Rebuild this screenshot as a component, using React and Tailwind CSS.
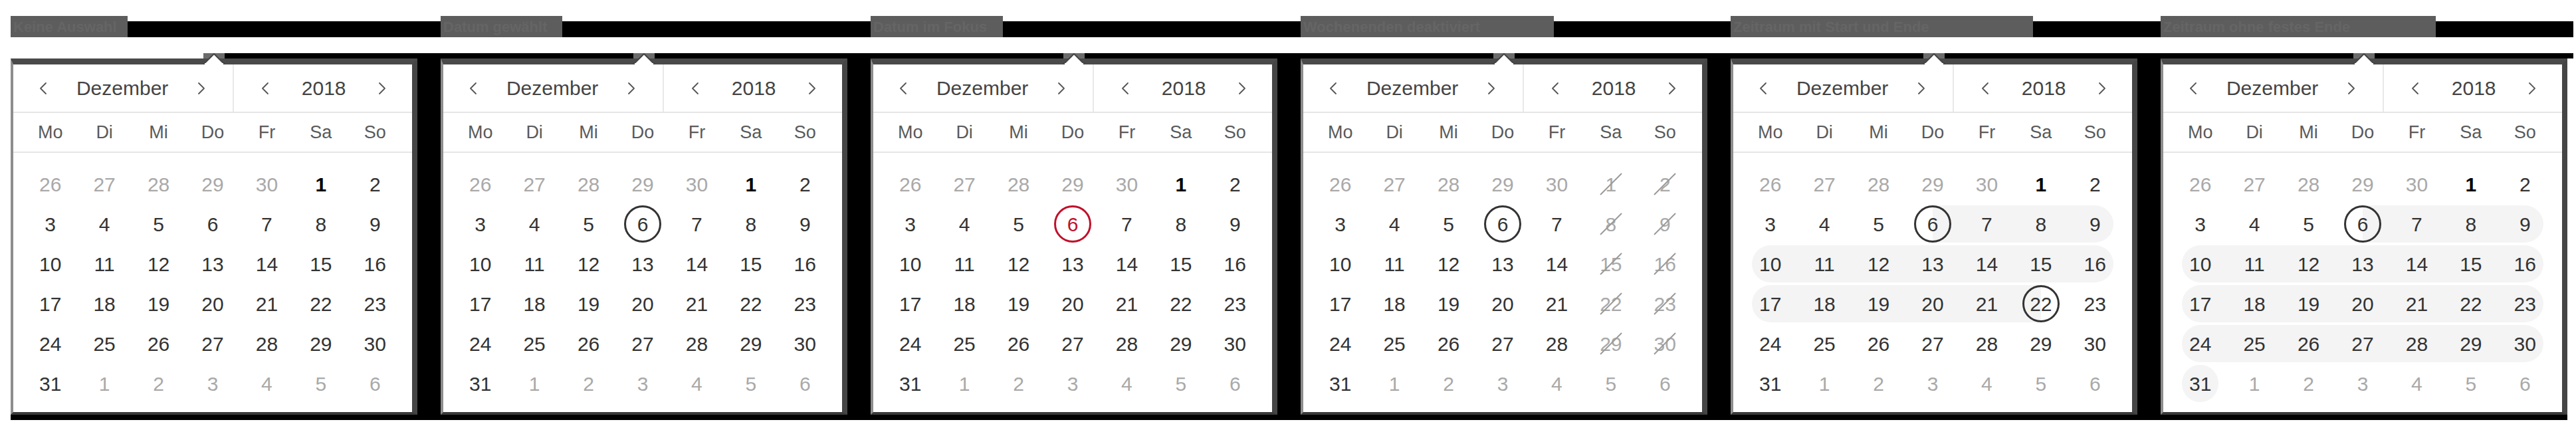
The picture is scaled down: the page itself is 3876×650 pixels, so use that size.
import React from 'react';

const FONT = "font-['Liberation_Sans',Arial,sans-serif]";

const WEEKDAYS = ['Mo', 'Di', 'Mi', 'Do', 'Fr', 'Sa', 'So'];
const COLS = ['col-start-1', 'col-start-2', 'col-start-3', 'col-start-4', 'col-start-5', 'col-start-6', 'col-start-7'];

// Dezember 2018, Woche beginnt am Montag (26. Nov bis 6. Jan)
const DAYS = (() => {
    const out = [];
    for (let d = 26; d <= 30; d++) out.push({ d, cur: false });
    for (let d = 1; d <= 31; d++) out.push({ d, cur: true });
    for (let d = 1; d <= 6; d++) out.push({ d, cur: false });
    return out.map((x, i) => ({ ...x, dow: i % 7, idx: i }));
})();

const IDX_6 = 10;
const IDX_22 = 26;
const IDX_31 = 35;

const panels = [
    { title: 'Keine Auswahl', titleW: 'w-[176px]' },
    { title: 'Datum gewählt', titleW: 'w-[183px]', circle: [IDX_6] },
    { title: 'Datum im Fokus', titleW: 'w-[199px]', circle: [IDX_6], red: true },
    { title: 'Wochenenden deaktiviert', titleW: 'w-[381px]', circle: [IDX_6], noWeekend: true },
    { title: 'Zeitraum mit Start und Ende', titleW: 'w-[455px]', circle: [IDX_6, IDX_22], range: [IDX_6, IDX_22, true] },
    { title: 'Zeitraum ohne festes Ende', titleW: 'w-[414px]', circle: [IDX_6], range: [IDX_6, IDX_31, false] },
];

function Chevron({ dir }) {
    return (
        <svg width="12" height="20" viewBox="0 0 12 20" fill="none" stroke="#555" strokeWidth="1.8" strokeLinecap="round" strokeLinejoin="round">
            {dir === 'left' ? <path d="M10 2 L2 10 L10 18" /> : <path d="M2 2 L10 10 L2 18" />}
        </svg>
    );
}

function Caret() {
    return (
        <svg className="absolute left-[290px] top-0" width="32" height="17" viewBox="0 0 32 17">
            <rect x="0" y="0" width="32" height="8" fill="#6c6c6c" />
            <rect x="0" y="8" width="32" height="9" fill="#4a4a4a" />
            <polygon points="0,17 16,1 32,17" fill="#ffffff" stroke="#444" strokeWidth="2" />
            <rect x="2" y="15" width="28" height="2" fill="#ffffff" />
        </svg>
    );
}

function DayCell({ day, panel }) {
    const disabled = panel.noWeekend && day.cur && day.dow >= 5;
    const circled = panel.circle && panel.circle.includes(day.idx);
    const bold = day.cur && day.d === 1 && !disabled;

    let color = 'text-[#333]';
    if (!day.cur || disabled) color = 'text-[#a9a9a9]';
    if (bold) color = 'text-black font-bold';
    if (circled && panel.red) color = 'text-[#c0102a]';

    return (
        <div className={`row-start-1 ${COLS[day.dow]} flex items-center justify-center`}>
            {circled ? (
                <span className={`w-[56px] h-[56px] rounded-full border-[3px] flex items-center justify-center ${panel.red ? 'border-[#c0102a]' : 'border-[#333]'} ${color}`}>
                    {day.d}
                </span>
            ) : (
                <span className={`relative inline-flex items-center justify-center ${color}`}>
                    {day.d}
                    {disabled && (
                        <svg className="absolute left-1/2 top-1/2 -translate-x-1/2 -translate-y-1/2" width="34" height="34" viewBox="0 0 34 34">
                            <line x1="1" y1="33" x2="33" y2="1" stroke="#9a9a9a" strokeWidth="2" />
                        </svg>
                    )}
                </span>
            )}
        </div>
    );
}

function WeekRow({ week, panel }) {
    let pill = null;
    if (panel.range) {
        const [a, b, hasEnd] = panel.range;
        const first = week[0].idx;
        const last = week[6].idx;
        const s = Math.max(a, first);
        const e = Math.min(b, last);
        if (s <= e) {
            const startCap = s === a;
            const endCap = e === b && hasEnd;
            pill = (
                <div
                    className={`row-start-1 self-center h-[56px] bg-[#f4f4f4] ${startCap ? 'ml-[41px]' : 'ml-[13px] rounded-l-full'} ${endCap ? 'mr-[41px]' : 'mr-[13px] rounded-r-full'}`}
                    style={{ gridColumn: `${s - first + 1} / ${e - first + 2}` }}
                />
            );
        }
    }
    return (
        <div className="grid grid-cols-7 h-[60px] px-[15px]">
            {pill}
            {week.map(day => <DayCell key={day.idx} day={day} panel={panel} />)}
        </div>
    );
}

function Calendar({ panel }) {
    const weeks = [];
    for (let w = 0; w < 6; w++) weeks.push(DAYS.slice(w * 7, w * 7 + 7));

    return (
        <div className="w-[612px] h-[536px] flex flex-col bg-white border-t-[9px] border-t-[#4a4a4a] border-l-[4px] border-l-[#8d8d8d] border-r-[8px] border-r-[#454545] border-b-[4px] border-b-[#3a3a3a]">
            <div className="h-[71px] flex text-[30px] text-[#444]">
                <div className="flex-[4] flex items-center justify-between pl-[39px] pr-[41px] border-r-2 border-[#e8e8e8]">
                    <Chevron dir="left" />
                    <span>Dezember</span>
                    <Chevron dir="right" />
                </div>
                <div className="flex-[3] flex items-center justify-between pl-[41px] pr-[39px]">
                    <Chevron dir="left" />
                    <span>2018</span>
                    <Chevron dir="right" />
                </div>
            </div>
            <div className="h-[2px] bg-[#e6e6e6]" />
            <div className="h-[58px] grid grid-cols-7 px-[15px] text-[27px] text-[#5a5a5a]">
                {WEEKDAYS.map(w => (
                    <div key={w} className="flex items-center justify-center">{w}</div>
                ))}
            </div>
            <div className="h-[2px] bg-[#e6e6e6]" />
            <div className="pt-[17px] text-[30px]">
                {weeks.map((week, i) => <WeekRow key={i} week={week} panel={panel} />)}
            </div>
        </div>
    );
}

export default function App() {
    return (
        <div className={`w-[3876px] h-[650px] bg-white overflow-hidden ${FONT}`}>
            {/* Überschriften */}
            <div className="flex pt-[24px] pl-[16px]">
                {panels.map((p, i) => (
                    <div key={i} className={`flex items-end h-[32px] ${i === panels.length - 1 ? 'w-[621px]' : 'w-[647px]'}`}>
                        <div className={`${p.titleW} h-[32px] flex items-center pl-[4px] bg-[#5d5d5d] text-[#656565] text-[22px] font-bold whitespace-nowrap`}>
                            {p.title}
                        </div>
                        <div className="flex-1 h-[24px] bg-black" />
                    </div>
                ))}
            </div>

            {/* Kalender */}
            <div className="flex pl-[16px] mt-[24px]">
                {panels.map((p, i) => {
                    const last = i === panels.length - 1;
                    return (
                        <div key={i} className={`relative flex flex-col ${last ? 'w-[621px]' : 'w-[647px]'}`}>
                            <div className="flex h-[8px]">
                                <div className={`w-[290px] ${i === 0 ? 'bg-white' : 'bg-black'}`} />
                                <div className="w-[32px]" />
                                <div className="flex-1 bg-black" />
                            </div>
                            <div className="flex">
                                <Calendar panel={p} />
                                <div className={`flex-1 ${last ? 'bg-white' : 'bg-black'}`} />
                            </div>
                            <div className="flex h-[8px]">
                                <div className="w-[612px] bg-black" />
                                <div className={`flex-1 ${last ? 'bg-white' : 'bg-black'}`} />
                            </div>
                            <Caret />
                        </div>
                    );
                })}
            </div>
        </div>
    );
}
